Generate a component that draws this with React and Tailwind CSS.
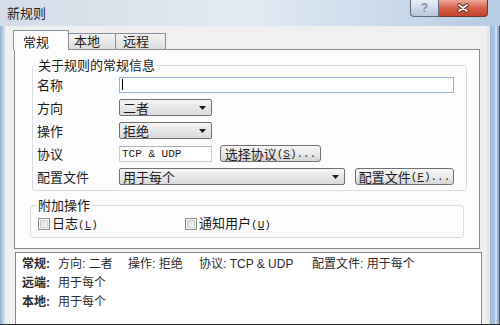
import React from "react";

const CJK = "font-[family-name:'Noto_Sans_CJK_SC',sans-serif]";

// Latin bits inside controls look like a half-width mono face
const Mono = ({ children }) => (
  <span className="font-[family-name:'Liberation_Mono',monospace] text-[11px]">
    {children}
  </span>
);

const Arrow = () => (
  <svg width="7" height="4" viewBox="0 0 7 4" className="shrink-0">
    <path d="M0 0h7L3.5 4z" fill="#1b1b1b" />
  </svg>
);

function Select({ value, className }) {
  return (
    <div
      className={`flex h-[17px] items-center justify-between rounded-[2px] border border-[#707070] bg-gradient-to-b from-[#f5f5f5] to-[#dadada] pl-[3px] pr-[5px] ${className}`}
    >
      <span>{value}</span>
      <Arrow />
    </div>
  );
}

function Button({ children, className }) {
  return (
    <div
      className={`flex h-[17px] items-center justify-center rounded-[3px] border border-[#707070] bg-gradient-to-b from-[#f7f7f7] via-[#ebebeb] to-[#d6d6d6] ${className}`}
    >
      {children}
    </div>
  );
}

function Check({ children }) {
  return (
    <div className="flex items-center gap-[2px]">
      <span className="block h-[12px] w-[12px] border border-[#8e8f8f] bg-[#f4f4f4] p-px">
        <span className="block h-full w-full border border-[#d0d0d0] bg-gradient-to-br from-[#dcdcdc] to-[#f8f8f8]" />
      </span>
      <span>{children}</span>
    </div>
  );
}

function Row({ label, children }) {
  return (
    <div className="flex h-[17px] items-center">
      <div className="w-[86px] pl-[4px]">{label}</div>
      {children}
    </div>
  );
}

export default function App() {
  return (
    <div
      className={`flex h-[325px] w-[500px] flex-col overflow-hidden border-b border-[#2a2a2a] bg-[#cfdbe8] text-[13px] leading-[16px] text-[#1a1a1a] ${CJK}`}
    >
      {/* title bar */}
      <div className="flex h-[26px] shrink-0 items-start bg-gradient-to-r from-[#d4dde7] via-[#e3ebf4] to-[#b6cbe3]">
        <div className="pl-[7px] pt-[5px] text-[#1e1e1e]">新规则</div>
        <div className="ml-auto mr-[12px] flex h-[17px]">
          <div className="flex w-[29px] items-center justify-center rounded-bl-[4px] border border-t-0 border-[#5d6c80] bg-gradient-to-b from-[#e9eef4] to-[#b7c6d8] font-[family-name:'Liberation_Sans',sans-serif] text-[12px] font-bold text-[#7e90a6]">
            ?
          </div>
          <div className="flex w-[49px] items-center justify-center rounded-br-[4px] border border-l-0 border-t-0 border-[#6b3a32] bg-gradient-to-b from-[#eba999] via-[#d6604a] to-[#c4432d]">
            <svg width="14" height="10" viewBox="0 0 14 10">
              <path d="M3 2l8 6M11 2l-8 6" stroke="#5a2a22" strokeWidth="3.6" strokeLinecap="round" />
              <path d="M3 2l8 6M11 2l-8 6" stroke="#fff" strokeWidth="1.8" strokeLinecap="round" />
            </svg>
          </div>
        </div>
      </div>

      <div className="flex flex-1">
        <div className="w-[5px] bg-gradient-to-r from-[#93aed2] to-[#dbe4ee]" />

        {/* client area */}
        <div className="flex flex-1 flex-col bg-[#f0f0f0] pt-[4px]">
          <div className="ml-[8px] flex h-[19px] items-end">
            <div className="relative z-10 -mb-px flex h-[20px] w-[56px] items-end border border-b-0 border-[#898c95] bg-[#fcfcfc] pl-[9px]">
              常规
            </div>
            <div className="-ml-px flex h-[16px] w-[48px] items-end border border-b-0 border-[#898c95] bg-gradient-to-b from-[#f3f3f3] to-[#dedede] pl-[5px]">
              本地
            </div>
            <div className="-ml-px flex h-[16px] w-[51px] items-end border border-b-0 border-[#898c95] bg-gradient-to-b from-[#f3f3f3] to-[#dedede] pl-[7px]">
              远程
            </div>
          </div>

          <div className="ml-[9px] mr-[7px] h-[200px] border border-[#898c95] bg-[#fcfcfc] pl-[17px] pr-[12px] pt-[8px]">
            <fieldset className="rounded-[3px] border border-[#d5dde3] pb-[5px]">
              <legend className="ml-[3px] px-[2px] leading-[14px]">关于规则的常规信息</legend>
              <div className="flex flex-col gap-[6px] pt-[4px]">
                <Row label="名称">
                  <div className="flex h-[16px] w-[335px] items-center border border-[#8fb4d8] bg-white pl-[2px]">
                    <span className="block h-[11px] w-px bg-black" />
                  </div>
                </Row>
                <Row label="方向">
                  <Select value="二者" className="w-[93px]" />
                </Row>
                <Row label="操作">
                  <Select value="拒绝" className="w-[93px]" />
                </Row>
                <Row label="协议">
                  <div className="flex h-[16px] w-[93px] items-center border border-[#c9cbd0] border-t-[#aeb0b6] bg-white pl-[2px]">
                    <Mono>TCP &amp; UDP</Mono>
                  </div>
                  <Button className="ml-[8px] w-[101px]">
                    选择协议
                    <Mono>
                      (<span className="underline">S</span>)...
                    </Mono>
                  </Button>
                </Row>
                <Row label="配置文件">
                  <Select value="用于每个" className="w-[226px]" />
                  <Button className="ml-[10px] w-[99px]">
                    配置文件
                    <Mono>
                      (<span className="underline">F</span>)...
                    </Mono>
                  </Button>
                </Row>
              </div>
            </fieldset>

            <fieldset className="ml-[-2px] mr-[3px] mt-[7px] rounded-[3px] border border-[#d5dde3] pb-[5px]">
              <legend className="ml-[5px] px-[2px] leading-[14px]">附加操作</legend>
              <div className="mt-[4px] flex h-[16px] items-center pl-[7px]">
                <div className="w-[147px]">
                  <Check>
                    日志<Mono>(<span className="underline">L</span>)</Mono>
                  </Check>
                </div>
                <Check>
                  通知用户<Mono>(<span className="underline">U</span>)</Mono>
                </Check>
              </div>
            </fieldset>
          </div>

          {/* summary */}
          <div className="ml-[10px] mr-[5px] mt-[3px] flex-1 border border-b-0 border-[#828790] bg-white pl-[6px] pt-[2px] font-[family-name:'Liberation_Sans','Noto_Sans_CJK_SC',sans-serif] text-[12px] leading-[19px] text-[#2b2b2b]">
            <div className="flex">
              <span className="w-[36px] font-bold">常规:</span>
              <span className="w-[70px]">方向: 二者</span>
              <span className="w-[71px]">操作: 拒绝</span>
              <span className="w-[113px]">协议: TCP &amp; UDP</span>
              <span>配置文件: 用于每个</span>
            </div>
            <div className="flex">
              <span className="w-[36px] font-bold">远端:</span>
              <span>用于每个</span>
            </div>
            <div className="flex">
              <span className="w-[36px] font-bold">本地:</span>
              <span>用于每个</span>
            </div>
          </div>
        </div>

        <div className="flex w-[13px]">
          <div className="w-[3px] bg-[#e3e8ee]" />
          <div className="w-px bg-[#a5b2c2]" />
          <div className="w-[4px] bg-[#a6c1e3]" />
          <div className="w-[2px] bg-[#cfdcee]" />
          <div className="w-[2px] bg-[#92b1da]" />
          <div className="w-px bg-[#4c5a6b]" />
        </div>
      </div>
    </div>
  );
}
